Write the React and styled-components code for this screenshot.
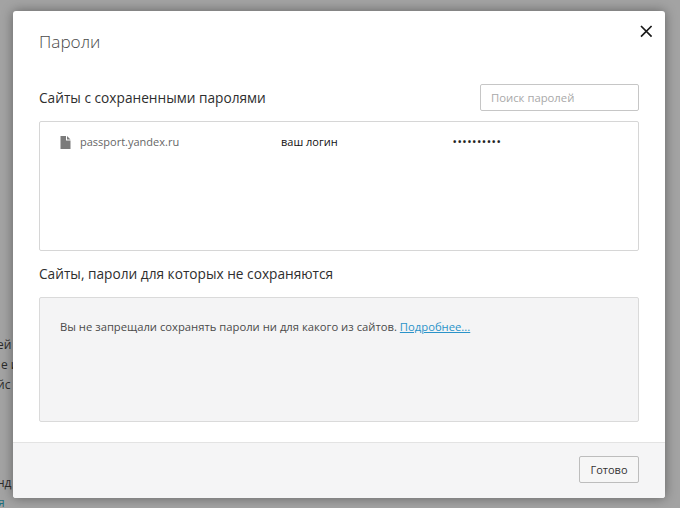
import React from "react";
import styled, { createGlobalStyle } from "styled-components";

const GlobalStyle = createGlobalStyle`
  html, body {
    margin: 0;
    padding: 0;
    width: 680px;
    height: 508px;
    overflow: hidden;
    background: #a3a3a3;
    font-family: "Open Sans", "Liberation Sans", sans-serif;
  }
`;

const Page = styled.div`
  position: relative;
  width: 680px;
  height: 508px;
  padding: 11px 15px 10px 13px;
  box-sizing: border-box;
  overflow: hidden;
  background: #a3a3a3;
`;

const BehindText = styled.div`
  position: absolute;
  left: ${(p) => p.$left}px;
  top: ${(p) => p.$top}px;
  font-size: 12px;
  line-height: 18px;
  color: ${(p) => p.$color || "#2b2b2b"};
  white-space: nowrap;
`;

const Dialog = styled.div`
  position: relative;
  display: flex;
  flex-direction: column;
  width: 652px;
  height: 487px;
  background: #fff;
  border-radius: 3px;
  box-shadow: 0 0 12px rgba(0, 0, 0, 0.4);
  overflow: hidden;
`;

const Body = styled.div`
  flex: 1;
  display: flex;
  flex-direction: column;
  padding: 0 26px;
`;

const Title = styled.h1`
  margin: 18px 0 0;
  font-size: 17.2px;
  line-height: 26px;
  font-weight: 300;
  color: #4a4a4a;
`;

const CloseButton = styled.button`
  position: absolute;
  top: 13px;
  right: 12px;
  width: 14px;
  height: 14px;
  padding: 0;
  border: 0;
  background: none;
  display: flex;
`;

const SectionHead = styled.div`
  display: flex;
  align-items: center;
  justify-content: space-between;
  height: 27px;
  margin-top: 29px;
`;

const SectionTitle = styled.h2`
  margin: 0;
  font-size: 13.7px;
  line-height: 18px;
  font-weight: 500;
  color: #2e2e2e;
`;

const Search = styled.input`
  width: 159px;
  height: 27px;
  box-sizing: border-box;
  padding: 0 10px;
  border: 1px solid #c6c6c6;
  border-radius: 2px;
  font: 400 11.3px "Open Sans", sans-serif;
  color: #333;
  &::placeholder {
    color: #a9a9a9;
    opacity: 1;
  }
`;

const PasswordList = styled.div`
  box-sizing: border-box;
  height: 130px;
  margin-top: 10px;
  padding: 11px 20px;
  border: 1px solid #d6d6d6;
  border-radius: 2px;
`;

const PasswordRow = styled.div`
  display: flex;
  align-items: center;
  height: 18px;
  font-size: 11px;
  line-height: 18px;
`;

const Site = styled.div`
  display: flex;
  align-items: center;
  gap: 9px;
  width: 221px;
  color: #666;
`;

const Login = styled.div`
  width: 172px;
  color: #111;
  font-weight: 500;
`;

const Dots = styled.div`
  color: #1f1f1f;
  font-size: 9px;
  font-weight: 700;
  letter-spacing: 1.5px;
`;

const ExceptionsTitle = styled(SectionTitle)`
  margin-top: 14px;
`;

const EmptyBox = styled.div`
  box-sizing: border-box;
  height: 125px;
  margin-top: 14px;
  padding: 20px 20px;
  background: #f4f4f5;
  border: 1px solid #dadada;
  border-radius: 2px;
  font-size: 11.25px;
  line-height: 18px;
  color: #4a4a4a;
`;

const MoreLink = styled.a`
  color: #2a93c9;
  text-decoration: underline;
`;

const Footer = styled.div`
  display: flex;
  align-items: center;
  justify-content: flex-end;
  height: 56px;
  box-sizing: border-box;
  padding: 0 26px 2px 0;
  background: #f5f5f6;
  border-top: 1px solid #e3e3e3;
`;

const DoneButton = styled.button`
  width: 60px;
  height: 27px;
  padding: 0;
  background: #f6f6f6;
  border: 1px solid #bdbdbd;
  border-radius: 2px;
  font: 400 11px "Open Sans", sans-serif;
  color: #333;
`;

function FileIcon() {
  return (
    <svg width="11" height="13" viewBox="0 0 11 13">
      <path d="M0.5 0H6V4.5H10.5V13H0.5Z" fill="#7b7b7b" />
      <path d="M7 0L10.5 3.5H7Z" fill="#7b7b7b" />
    </svg>
  );
}

function CloseIcon() {
  return (
    <svg width="14" height="14" viewBox="0 0 14 14">
      <path d="M2 2L12.6 12.6M12.6 2L2 12.6" stroke="#1a1a1a" strokeWidth="1.7" fill="none" />
    </svg>
  );
}

export default function App() {
  return (
    <Page>
      <GlobalStyle />
      <BehindText $left={-3} $top={336}>ей</BehindText>
      <BehindText $left={1} $top={356}>е и</BehindText>
      <BehindText $left={-3} $top={376}>йс</BehindText>
      <BehindText $left={-3} $top={474}>нд</BehindText>
      <BehindText $left={-2} $top={494} $color="#1f6f7d">я</BehindText>
      <Dialog>
        <CloseButton aria-label="Закрыть">
          <CloseIcon />
        </CloseButton>
        <Body>
          <Title>Пароли</Title>
          <SectionHead>
            <SectionTitle>Сайты с сохраненными паролями</SectionTitle>
            <Search placeholder="Поиск паролей" />
          </SectionHead>
          <PasswordList>
            <PasswordRow>
              <Site>
                <FileIcon />
                passport.yandex.ru
              </Site>
              <Login>ваш логин</Login>
              <Dots>••••••••••</Dots>
            </PasswordRow>
          </PasswordList>
          <ExceptionsTitle>Сайты, пароли для которых не сохраняются</ExceptionsTitle>
          <EmptyBox>
            Вы не запрещали сохранять пароли ни для какого из сайтов.{" "}
            <MoreLink href="#">Подробнее...</MoreLink>
          </EmptyBox>
        </Body>
        <Footer>
          <DoneButton>Готово</DoneButton>
        </Footer>
      </Dialog>
    </Page>
  );
}
